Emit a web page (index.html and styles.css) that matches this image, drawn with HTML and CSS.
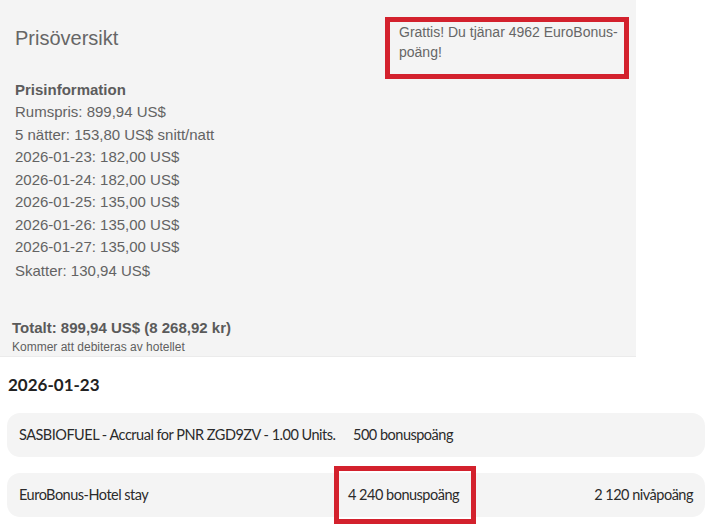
FILE: index.html
```html
<!DOCTYPE html>
<html lang="sv">
<head>
<meta charset="utf-8">
<title>Prisöversikt</title>
<link rel="stylesheet" href="styles.css">
</head>
<body>
<section class="panel">
  <div class="panel-top">
    <div class="info">
      <h1 class="title">Prisöversikt</h1>
      <h2 class="subtitle">Prisinformation</h2>
      <ul class="lines">
        <li>Rumspris: 899,94 US$</li>
        <li>5 nätter: 153,80 US$ snitt/natt</li>
        <li>2026-01-23: 182,00 US$</li>
        <li>2026-01-24: 182,00 US$</li>
        <li>2026-01-25: 135,00 US$</li>
        <li>2026-01-26: 135,00 US$</li>
        <li>2026-01-27: 135,00 US$</li>
        <li class="tax">Skatter: 130,94 US$</li>
      </ul>
    </div>
    <p class="promo">Grattis! Du tjänar 4962 EuroBonus-poäng!</p>
  </div>
  <div class="totals">
    <p class="total">Totalt: 899,94 US$ (8 268,92 kr)</p>
    <p class="note">Kommer att debiteras av hotellet</p>
  </div>
</section>

<section class="activity">
  <h3 class="date">2026-01-23</h3>
  <div class="row">
    <span class="desc">SASBIOFUEL - Accrual for PNR ZGD9ZV - 1.00 Units.</span>
    <span class="points first">500 bonuspoäng</span>
    <span class="level"></span>
  </div>
  <div class="row">
    <span class="desc">EuroBonus-Hotel stay</span>
    <span class="points highlighted">4 240 bonuspoäng</span>
    <span class="level">2 120 nivåpoäng</span>
  </div>
</section>
</body>
</html>
```

FILE: styles.css
```css
* { box-sizing: border-box; }

html, body {
  margin: 0;
  padding: 0;
  background: #ffffff;
}

body {
  width: 706px;
  min-height: 531px;
  font-family: "Liberation Sans", Arial, sans-serif;
  color: #636363;
}

.panel {
  width: 636px;
  height: 357px;
  background: #f4f4f4;
  border-bottom: 1px solid #ebebeb;
  display: flex;
  flex-direction: column;
}

.panel-top {
  display: flex;
  align-items: flex-start;
}

.info {
  padding-left: 15px;
  flex: 1;
}

.title {
  margin: 26px 0 0;
  font-size: 20px;
  line-height: 24px;
  font-weight: normal;
  color: #666666;
}

.subtitle {
  margin: 29px 0 0;
  font-size: 15px;
  line-height: 22px;
  font-weight: bold;
  color: #5c5c5c;
}

.lines {
  list-style: none;
  margin: 0;
  padding: 0;
  font-size: 15px;
  line-height: 22.5px;
}

.lines .tax {
  margin-top: 1px;
}

.promo {
  margin: 17px 7px 0 0;
  width: 244px;
  padding: 0 5px 12px 9px;
  border: 5px solid #d3212d;
  font-size: 14px;
  line-height: 20px;
  color: #666666;
}

.totals {
  margin-top: auto;
  padding: 0 0 2px 12px;
}

.total {
  margin: 0;
  font-size: 15px;
  line-height: 18px;
  font-weight: bold;
  color: #5a5a5a;
}

.note {
  margin: 3px 0 0;
  font-size: 12px;
  line-height: 14px;
  color: #5f5f5f;
}

.activity {
  padding: 0 1px 14px 7px;
  font-family: "Lato", "Noto Sans", sans-serif;
  color: #2b2b2b;
}

.date {
  margin: 18px 0 0 1px;
  font-size: 17px;
  line-height: 20px;
  font-weight: bold;
  color: #222222;
}

.row {
  margin-top: 18px;
  height: 44px;
  border-radius: 13px;
  background: #f4f4f4;
  display: grid;
  grid-template-columns: 329px auto 1fr;
  align-items: center;
  padding: 0 12px 0 12px;
  font-size: 14.5px;
  line-height: 18px;
  letter-spacing: -0.5px;
}

.row + .row {
  margin-top: 16px;
}

.desc {
  white-space: nowrap;
}

.points {
  white-space: nowrap;
  position: relative;
}

.points.first {
  margin-left: 5px;
}

.level {
  text-align: right;
  white-space: nowrap;
}

.highlighted::after {
  content: "";
  position: absolute;
  left: -14px;
  right: -17px;
  top: -20px;
  bottom: -20px;
  border: 5px solid #d3212d;
}
```
